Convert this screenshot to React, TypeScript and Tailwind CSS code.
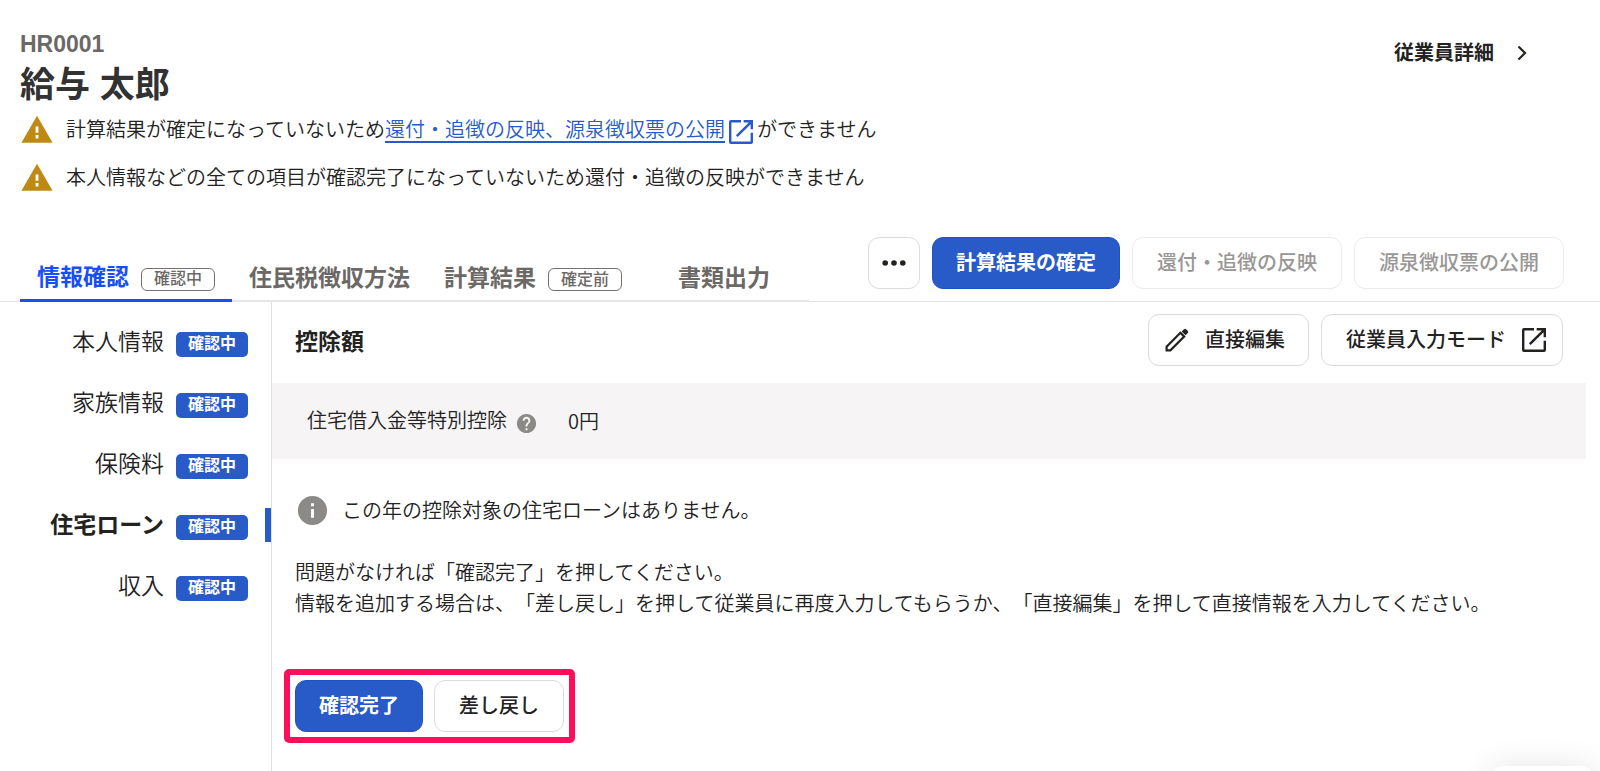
import type { ReactNode } from "react";

function WarningIcon() {
  return (
    <svg viewBox="0 0 24 24" className="size-[34px] shrink-0 fill-[#be8a14]" aria-hidden="true">
      <path d="M1 21h22L12 2 1 21zm12-3h-2v-2.400h2v2.400zm0-4h-2V9.500h2V14z" />
    </svg>
  );
}

function OpenInNewIcon({ className }: { className: string }) {
  return (
    <svg viewBox="0 0 24 24" className={className} fill="currentColor" aria-hidden="true">
      <path d="M19.200 19.200H4.800V4.800H12V3H4.500A1.500 1.500 0 0 0 3 4.500v15A1.500 1.500 0 0 0 4.500 21h15a1.500 1.500 0 0 0 1.500-1.500V12.500h-1.800v6.700zM14 3v1.800h3.900L8.200 14.500l1.300 1.300 9.700-9.700V10H21V3h-7z" />
    </svg>
  );
}

function Tab({ label, status, active = false }: { label: string; status?: string; active?: boolean }) {
  return (
    <button
      role="tab"
      aria-selected={active}
      className={
        "-mb-px flex h-[55px] items-center justify-center gap-3 px-[17px] pt-2 text-[23px] font-bold leading-8 " +
        (active
          ? "border-b-[3px] border-[#1450f5] text-[#1450f5]"
          : "border-b-2 border-[#e6e6e6] text-[#6b6866]") +
        (status || active ? "" : " last:min-w-[170px]")
      }
    >
      {label}
      {status && (
        <span className="mt-1 flex h-[23px] items-center rounded-[6px] border border-[#75716f] px-[12px] text-[16px] font-medium leading-5 text-[#6b6866]">
          {status}
        </span>
      )}
    </button>
  );
}

function Button({
  children,
  variant = "outline",
  className = "px-[23px]",
  disabled = false,
}: {
  children: ReactNode;
  variant?: "outline" | "primary";
  className?: string;
  disabled?: boolean;
}) {
  return (
    <button
      disabled={disabled}
      className={
        "flex h-[52px] shrink-0 items-center justify-center whitespace-nowrap rounded-[11px] border text-[20px] leading-7 " +
        (variant === "primary"
          ? "border-[#1f52c6] bg-[#285ac8] font-bold text-white "
          : disabled
            ? "border-[#ebebeb] bg-white font-medium text-[#999796] "
            : "border-[#dcdcdc] bg-white font-medium text-[#23221f] ") +
        className
      }
    >
      {children}
    </button>
  );
}

const sections = [
  { label: "本人情報", status: "確認中" },
  { label: "家族情報", status: "確認中" },
  { label: "保険料", status: "確認中" },
  { label: "住宅ローン", status: "確認中", current: true },
  { label: "収入", status: "確認中" },
];

export default function App() {
  return (
    <div className="flex min-h-screen flex-col bg-white font-['Liberation_Sans','Noto_Sans_CJK_JP',sans-serif] text-[20px] font-[350] leading-8 text-[#23221f] [text-spacing-trim:space-all]">
      <header className="flex items-start justify-between pl-5 pr-[68px] pt-[30px]">
        <div>
          <p className="text-[23px] font-bold leading-7 text-[#6b6866]">HR0001</p>
          <h1 className="text-[35px] font-bold leading-[54px] text-[#323232]">給与 太郎</h1>
          <div className="flex flex-col gap-[13px]">
            <p className="flex items-center gap-3">
              <WarningIcon />
              <span className="flex items-center">
                計算結果が確定になっていないため
                <a href="#publish" className="flex items-center text-[#285ac8]">
                  <span className="underline decoration-2 underline-offset-4">還付・追徴の反映、源泉徴収票の公開</span>
                  <OpenInNewIcon className="mt-1 size-8" />
                </a>
                ができません
              </span>
            </p>
            <p className="flex items-center gap-3">
              <WarningIcon />
              <span>本人情報などの全ての項目が確認完了になっていないため還付・追徴の反映ができません</span>
            </p>
          </div>
        </div>
        <a href="#employee" className="mt-[7px] flex items-center gap-[18px] font-bold">
          従業員詳細
          <svg viewBox="0 0 20 20" className="size-5" fill="none" stroke="currentColor" strokeWidth="2.200" aria-hidden="true">
            <path d="M6.500 3.500 13 10l-6.500 6.500" />
          </svg>
        </a>
      </header>

      <div className="mt-[42px] flex items-end justify-between border-b border-[#e2e2e0] pl-5 pr-9">
        <div role="tablist" className="flex">
          <Tab label="情報確認" status="確認中" active />
          <Tab label="住民税徴収方法" />
          <Tab label="計算結果" status="確定前" />
          <Tab label="書類出力" />
        </div>
        <div className="mb-3 flex gap-3">
          <Button className="w-[52px]">
            <svg viewBox="0 0 24 6" className="h-[6px] w-6" fill="currentColor" role="img" aria-label="その他">
              <circle cx="3.200" cy="3" r="2.800" />
              <circle cx="12" cy="3" r="2.800" />
              <circle cx="20.800" cy="3" r="2.800" />
            </svg>
          </Button>
          <Button variant="primary">計算結果の確定</Button>
          <Button disabled className="px-6">還付・追徴の反映</Button>
          <Button disabled className="px-6">源泉徴収票の公開</Button>
        </div>
      </div>

      <div className="flex grow">
        <nav className="w-[272px] shrink-0 border-r border-[#dfdfdf] pt-[23px]">
          <ul>
            {sections.map((s) => (
              <li key={s.label} className="flex h-[61px] items-start justify-end">
                <a
                  href={"#" + s.label}
                  aria-current={s.current ? "page" : undefined}
                  className={
                    "flex h-[34px] items-center gap-3 border-r-[6px] pr-[17px] text-[23px] " +
                    (s.current ? "border-[#285ac8] font-bold" : "border-transparent")
                  }
                >
                  {s.label}
                  <span className="mt-1 flex h-[25px] items-center rounded-[5px] bg-[#285ac8] px-3 text-[16px] font-bold leading-5 text-white">
                    {s.status}
                  </span>
                </a>
              </li>
            ))}
          </ul>
        </nav>

        <main className="min-w-0 grow pr-[14px]">
          <div className="flex items-center justify-between pb-[17px] pl-[23px] pr-[23px] pt-3">
            <h2 className="mt-1 text-[23px] font-bold">控除額</h2>
            <div className="flex gap-3">
              <Button className="gap-4 pl-4 pr-[23px]">
                <svg viewBox="0 0 24 24" className="size-6" fill="none" stroke="currentColor" strokeWidth="2.200" aria-hidden="true">
                  <path d="M1.600 22.400v-3.800L15.400 4.800l3.800 3.800L5.400 22.400z" />
                  <path
                    fill="currentColor"
                    stroke="none"
                    d="M16.700 3.500 19 1.200a1.500 1.500 0 0 1 2.100 0l1.700 1.700a1.500 1.500 0 0 1 0 2.100l-2.300 2.300z"
                  />
                </svg>
                直接編集
              </Button>
              <Button className="gap-3 pl-6 pr-3">
                従業員入力モード
                <OpenInNewIcon className="size-8" />
              </Button>
            </div>
          </div>

          <dl className="flex h-[76px] items-center gap-[30px] bg-[#f6f4f5] pl-[35px]">
            <dt className="flex items-center gap-2">
              住宅借入金等特別控除
              <svg viewBox="0 0 24 24" className="mt-1 size-[23px] fill-[#8c8a87]" role="img" aria-label="ヘルプ">
                <path d="M12 2C6.480 2 2 6.480 2 12s4.480 10 10 10 10-4.480 10-10S17.520 2 12 2zm1 17h-2v-2h2v2zm2.070-7.750-.9.920C13.450 12.900 13 13.500 13 15h-2v-.5c0-1.100.45-2.100 1.170-2.830l1.240-1.260c.37-.36.59-.86.590-1.410 0-1.100-.9-2-2-2s-2 .9-2 2H8c0-2.210 1.790-4 4-4s4 1.790 4 4c0 .88-.36 1.680-.93 2.250z" />
              </svg>
            </dt>
            <dd className="font-['Noto_Sans_CJK_JP',sans-serif]">0円</dd>
          </dl>

          <div className="pl-[23px]">
            <p className="mt-[34px] flex items-center gap-3">
              <svg viewBox="0 0 24 24" className="size-[35px] fill-[#8c8a87]" aria-hidden="true">
                <path d="M12 2C6.480 2 2 6.480 2 12s4.480 10 10 10 10-4.480 10-10S17.520 2 12 2zm1 15h-2v-6h2v6zm0-8h-2V7h2v2z" />
              </svg>
              この年の控除対象の住宅ローンはありません。
            </p>
            <p className="mt-[30px] leading-[31px]">
              問題がなければ「確認完了」を押してください。
              <br />
              情報を追加する場合は、「差し戻し」を押して従業員に再度入力してもらうか、「直接編集」を押して直接情報を入力してください。
            </p>
          </div>

          <div className="ml-3 mt-[49px] flex w-fit gap-[11px] rounded-[5px] border-[6px] border-[#ff0f5b] p-[5px]">
            <Button variant="primary">確認完了</Button>
            <Button className="px-6">差し戻し</Button>
          </div>
        </main>
      </div>

      <div className="fixed -bottom-[59px] right-1 h-16 w-[108px] rounded-2xl bg-white shadow-[0_0_32px_rgba(0,0,0,0.1)]" />
    </div>
  );
}
